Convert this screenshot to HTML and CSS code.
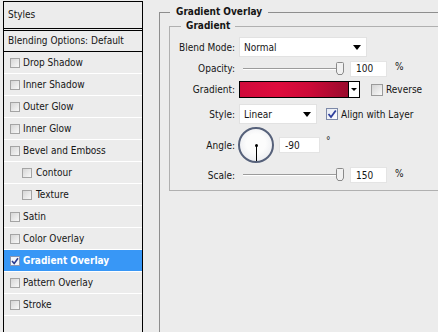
FILE: index.html
```html
<!DOCTYPE html>
<html lang="en">
<head>
    <meta charset="UTF-8">
    <title>Layer Style - Gradient Overlay</title>
    <link rel="stylesheet" href="styles.css">
</head>
<body>
    <div class="dialog">
        <div class="styles-list">
            <div class="list-head">Styles</div>
            <div class="list-blend">Blending Options: Default</div>
            <div class="style-row"><span class="cb"></span>Drop Shadow</div>
            <div class="style-row"><span class="cb"></span>Inner Shadow</div>
            <div class="style-row"><span class="cb"></span>Outer Glow</div>
            <div class="style-row"><span class="cb"></span>Inner Glow</div>
            <div class="style-row"><span class="cb"></span>Bevel and Emboss</div>
            <div class="style-row sub"><span class="cb"></span>Contour</div>
            <div class="style-row sub"><span class="cb"></span>Texture</div>
            <div class="style-row"><span class="cb"></span>Satin</div>
            <div class="style-row"><span class="cb"></span>Color Overlay</div>
            <div class="style-row active">
                <span class="cb checked">
                    <svg width="8" height="8" viewBox="0 0 8 8"><path d="M1 4 L3.2 6.5 L7 1.2" fill="none" stroke="#2b3a8f" stroke-width="1.6"/></svg>
                </span>Gradient Overlay
            </div>
            <div class="style-row"><span class="cb"></span>Pattern Overlay</div>
            <div class="style-row"><span class="cb"></span>Stroke</div>
        </div>

        <div class="settings">
            <fieldset class="group outer">
                <legend>Gradient Overlay</legend>
                <fieldset class="group inner">
                    <legend>Gradient</legend>
                    <div class="form">
                        <label>Blend Mode:</label>
                        <div class="ctrl">
                            <div class="select blend"><span>Normal</span><i class="arrow"></i></div>
                        </div>

                        <label>Opacity:</label>
                        <div class="ctrl">
                            <div class="slider">
                                <svg class="thumb" width="8" height="13" viewBox="0 0 8 13"><path d="M1.5 0.5 H6.5 A1 1 0 0 1 7.5 1.5 V10 L6 12.5 H2 L0.5 10 V1.5 A1 1 0 0 1 1.5 0.5 Z" fill="#f1f1f1" stroke="#8a8a8a"/></svg>
                            </div>
                            <input class="num" type="text" value="100">
                            <span class="unit">%</span>
                        </div>

                        <label>Gradient:</label>
                        <div class="ctrl">
                            <div class="gradient">
                                <div class="gradient-fill"></div>
                                <div class="gradient-arrow"><i class="arrow small"></i></div>
                            </div>
                            <span class="check reverse"></span>
                            <span class="check-label">Reverse</span>
                        </div>

                        <label>Style:</label>
                        <div class="ctrl">
                            <div class="select style"><span>Linear</span><i class="arrow"></i></div>
                            <span class="check align checked">
                                <svg width="10" height="10" viewBox="0 0 10 10"><path d="M1.5 5 L4 8 L8.8 1.5" fill="none" stroke="#2e3f9e" stroke-width="1.8"/></svg>
                            </span>
                            <span class="check-label">Align with Layer</span>
                        </div>

                        <label>Angle:</label>
                        <div class="ctrl">
                            <div class="dial"></div>
                            <input class="num angle" type="text" value="-90">
                            <span class="unit deg">°</span>
                        </div>

                        <label>Scale:</label>
                        <div class="ctrl">
                            <div class="slider">
                                <svg class="thumb" width="8" height="13" viewBox="0 0 8 13"><path d="M1.5 0.5 H6.5 A1 1 0 0 1 7.5 1.5 V10 L6 12.5 H2 L0.5 10 V1.5 A1 1 0 0 1 1.5 0.5 Z" fill="#f1f1f1" stroke="#8a8a8a"/></svg>
                            </div>
                            <input class="num" type="text" value="150">
                            <span class="unit">%</span>
                        </div>
                    </div>
                </fieldset>
            </fieldset>
        </div>
    </div>
</body>
</html>
```

FILE: styles.css
```css
body {
    margin: 0;
    width: 438px;
    height: 332px;
    overflow: hidden;
    background-color: #ececec;
    color: #151515;
    font-family: "DejaVu Sans Condensed", "Liberation Sans", sans-serif;
    font-size: 10px;
}
.dialog {
    display: flex;
    height: 332px;
    overflow: hidden;
}

/* left list of styles */
.styles-list {
    flex: none;
    width: 140px;
    box-sizing: border-box;
    margin: 1px 0 0 3px;
    border: 1px solid #000;
    border-bottom: none;
}
.list-head {
    height: 26px;
    line-height: 26px;
    padding-left: 4px;
    border-bottom: 3px double #000;
}
.list-blend {
    height: 20px;
    line-height: 20px;
    padding-left: 4px;
    border-bottom: 1px solid #000;
}
.style-row {
    display: flex;
    align-items: center;
    gap: 3px;
    height: 21px;
    padding-left: 6px;
    border-bottom: 1px solid #fff;
}
.style-row.sub {
    padding-left: 18px;
    gap: 4px;
}
.style-row.active {
    background-color: #3897f6;
    color: #fff;
    font-weight: bold;
}
.cb {
    display: flex;
    align-items: center;
    justify-content: center;
    width: 10px;
    height: 10px;
    box-sizing: border-box;
    border: 1px solid #a4a4a4;
    background: linear-gradient(135deg, #d6d6d6, #f8f8f8);
}
.cb.checked {
    background: #f4f6fb;
    border-color: #8b95b0;
}

/* right settings area */
.settings {
    flex: 1;
    display: flex;
    flex-direction: column;
    min-width: 0;
}
fieldset.group {
    margin: 0;
    padding: 0;
    min-width: 0;
    border: 1px solid #a2a2a2;
    border-right: none;
}
fieldset.group legend {
    font-weight: bold;
    line-height: 14px;
    padding: 0 6px;
    margin-left: 10px;
}
.group.outer {
    flex: 1;
    margin: 5px 0 0 16px;
    border-color: #8e8e8e;
    border-bottom: none;
}
.group.inner {
    margin-left: 9px;
    border-color: #b0b0b0;
}
.group.inner legend {
    padding: 0 5px;
    margin-left: 11px;
}
.form {
    display: grid;
    grid-template-columns: 65px auto;
    grid-template-rows: 22px 21px 21px 28px 34px 26px;
    column-gap: 4px;
    align-items: center;
    padding: 3px 0 2px;
}
.form label {
    text-align: right;
}
.ctrl {
    display: flex;
    align-items: center;
}

.select {
    display: flex;
    align-items: center;
    justify-content: space-between;
    height: 20px;
    box-sizing: border-box;
    padding: 0 5px 0 4px;
    background-color: #fff;
    border: 1px solid #e2e2e2;
}
.select.blend {
    width: 128px;
}
.select.style {
    width: 78px;
}
.arrow {
    width: 0;
    height: 0;
    border-left: 4px solid transparent;
    border-right: 4px solid transparent;
    border-top: 5px solid #000;
}
.arrow.small {
    border-left-width: 3px;
    border-right-width: 3px;
    border-top-width: 3px;
}

.slider {
    position: relative;
    width: 105px;
    height: 14px;
}
.slider::before {
    content: "";
    position: absolute;
    left: 4px;
    right: 6px;
    top: 6px;
    border-top: 1px solid #9c9c9c;
    border-bottom: 1px solid #fff;
}
.thumb {
    position: absolute;
    right: 0;
    top: 0;
}
.num {
    width: 37px;
    height: 16px;
    box-sizing: border-box;
    margin: 0 0 0 6px;
    padding: 0 0 0 5px;
    border: 1px solid #e4e4e4;
    background-color: #fff;
    font-family: inherit;
    font-size: 10px;
    color: #151515;
    outline: none;
}
.num.angle {
    width: 41px;
    margin-left: 5px;
}
.unit {
    margin: 0 0 4px 8px;
}
.unit.deg {
    margin: 0 0 9px 6px;
}

.gradient {
    display: flex;
    width: 121px;
    height: 17px;
    box-sizing: border-box;
    border: 1px solid #000;
}
.gradient-fill {
    flex: 1;
    background: linear-gradient(to right, #d00b3b 0%, #de0c3d 35%, #cc0a38 65%, #9a0b2d 100%);
}
.gradient-arrow {
    display: flex;
    align-items: center;
    justify-content: center;
    width: 10px;
    border-left: 1px solid #000;
    background-color: #fff;
}

.check {
    display: flex;
    align-items: center;
    justify-content: center;
    width: 12px;
    height: 12px;
    box-sizing: border-box;
    border: 1px solid #9a9a9a;
    background: linear-gradient(135deg, #d4d4d4, #f9f9f9);
}
.check.reverse {
    margin-left: 11px;
}
.check.align {
    margin-left: 9px;
}
.check.checked {
    border-color: #7d89a8;
    background: linear-gradient(135deg, #e4e9f3, #fdfdff);
}
.check-label {
    margin-left: 3px;
}

.dial {
    position: relative;
    width: 36px;
    height: 36px;
    box-sizing: border-box;
    margin-left: -1px;
    border: 2px solid #56617a;
    border-radius: 50%;
    background: radial-gradient(circle at 50% 45%, #fcfcfc 40%, #e2e4ea 100%);
}
.dial::before {
    content: "";
    position: absolute;
    left: 15px;
    top: 15px;
    width: 3px;
    height: 3px;
    border-radius: 50%;
    background-color: #000;
}
.dial::after {
    content: "";
    position: absolute;
    left: 16px;
    top: 16px;
    width: 1px;
    height: 16px;
    background-color: #000;
}
```
